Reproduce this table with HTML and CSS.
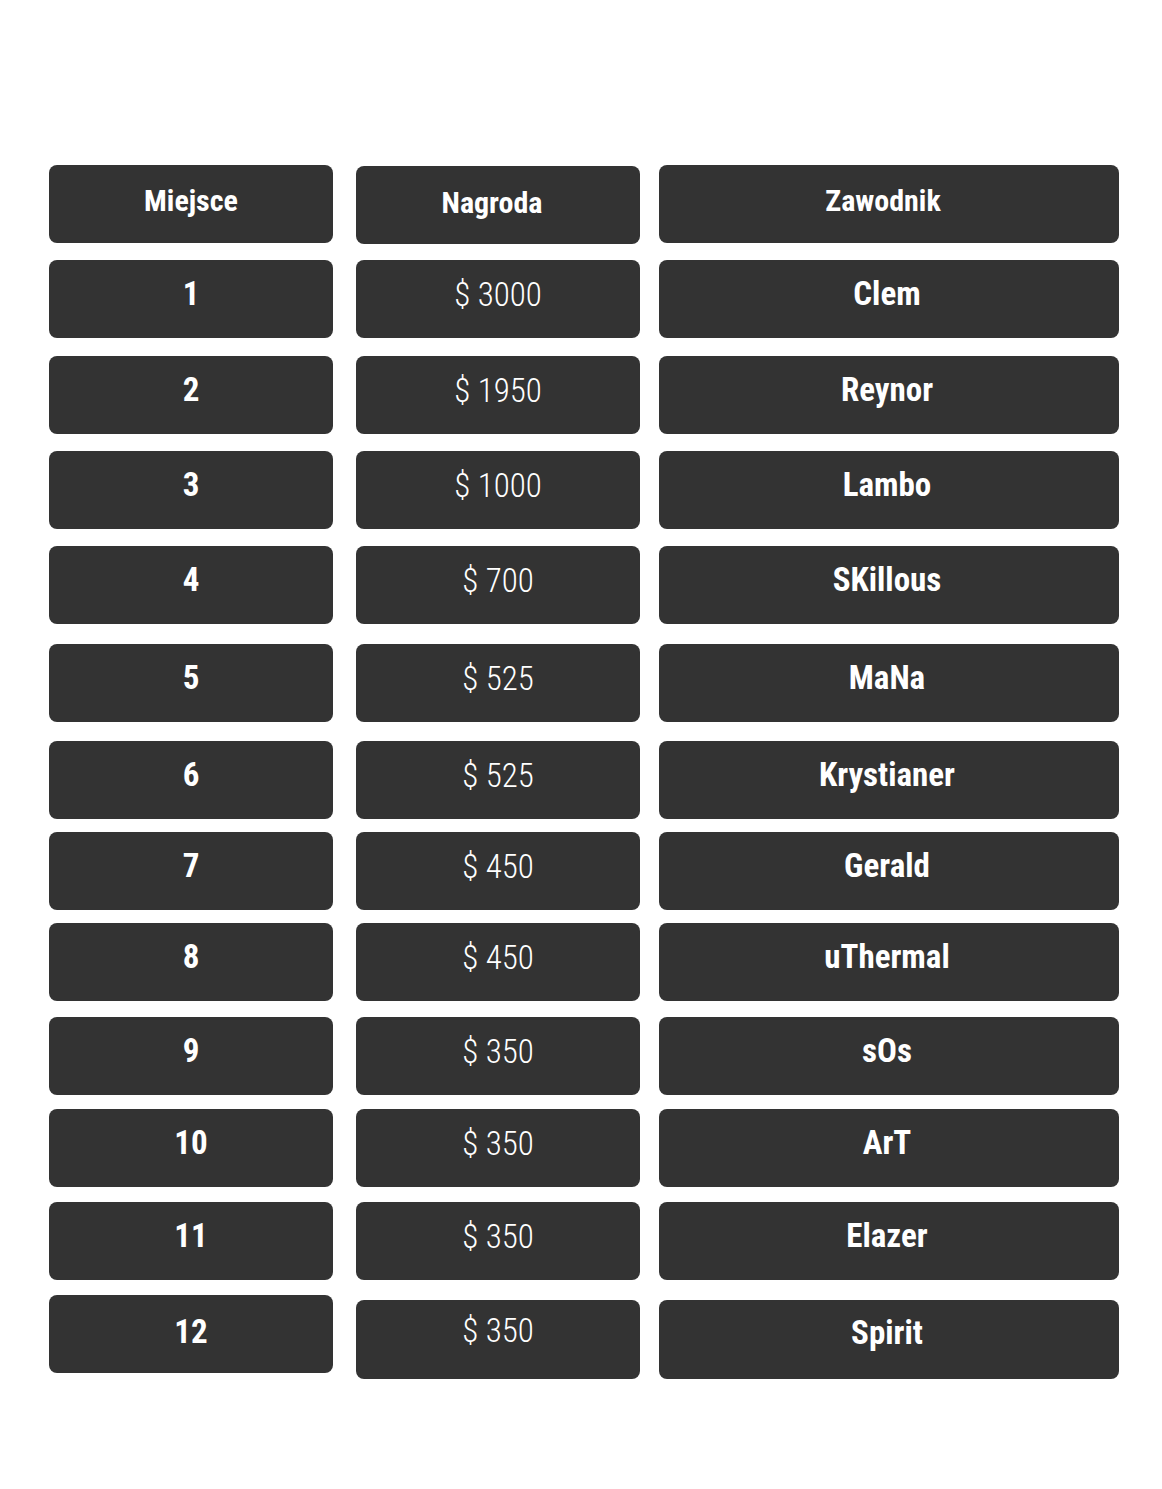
FILE: index.html
```html
<!DOCTYPE html>
<html lang="pl">
<head>
<meta charset="utf-8">
<title>Wyniki</title>
<link rel="stylesheet" href="styles.css">
</head>
<body>
<main class="board">
  <div class="cell head">Miejsce</div>
  <div class="cell head head-prize">Nagroda</div>
  <div class="cell head wide head-player">Zawodnik</div>

  <div class="cell place">1</div>
  <div class="cell prize">$ 3000</div>
  <div class="cell player wide">Clem</div>

  <div class="cell place">2</div>
  <div class="cell prize">$ 1950</div>
  <div class="cell player wide">Reynor</div>

  <div class="cell place">3</div>
  <div class="cell prize">$ 1000</div>
  <div class="cell player wide">Lambo</div>

  <div class="cell place">4</div>
  <div class="cell prize">$ 700</div>
  <div class="cell player wide">SKillous</div>

  <div class="cell place">5</div>
  <div class="cell prize">$ 525</div>
  <div class="cell player wide">MaNa</div>

  <div class="cell place">6</div>
  <div class="cell prize">$ 525</div>
  <div class="cell player wide">Krystianer</div>

  <div class="cell place">7</div>
  <div class="cell prize">$ 450</div>
  <div class="cell player wide">Gerald</div>

  <div class="cell place">8</div>
  <div class="cell prize">$ 450</div>
  <div class="cell player wide">uThermal</div>

  <div class="cell place">9</div>
  <div class="cell prize">$ 350</div>
  <div class="cell player wide">sOs</div>

  <div class="cell place">10</div>
  <div class="cell prize">$ 350</div>
  <div class="cell player wide">ArT</div>

  <div class="cell place">11</div>
  <div class="cell prize">$ 350</div>
  <div class="cell player wide">Elazer</div>

  <div class="cell place last">12</div>
  <div class="cell prize last shifted">$ 350</div>
  <div class="cell player wide last shifted">Spirit</div>
</main>
</body>
</html>
```

FILE: styles.css
```css
html, body {
  margin: 0;
  padding: 0;
  background: #ffffff;
}

body {
  font-family: Roboto, "Liberation Sans", sans-serif;
  font-stretch: condensed;
  color: #ffffff;
}

.board {
  display: grid;
  grid-template-columns: 307px 303px 460px;
  grid-template-rows: 95px 96px 95px 95px 98px 97px 91px 91px 94px 92px 93px 93px 84px;
  padding: 165px 0 0 49px;
  height: 1324px;
}

.cell {
  width: 284px;
  height: 78px;
  box-sizing: border-box;
  background: #333333;
  border-radius: 8px;
  text-align: center;
  line-height: 1.17;
  padding-top: 15px;
  white-space: nowrap;
}

.cell.wide {
  width: 460px;
  padding-right: 4px;
}

.head {
  font-size: 30px;
  font-weight: 700;
  padding-top: 18px;
}

.head-prize {
  margin-top: 1px;
  padding-top: 19px;
  padding-right: 12px;
}

.cell.head-player {
  padding-right: 12px;
}

.place,
.player {
  font-size: 33px;
  font-weight: 700;
}

.prize {
  font-size: 33px;
  font-weight: 300;
  padding-top: 16px;
}

.shifted {
  margin-top: 5px;
  height: 79px;
}

.place.last {
  padding-top: 18px;
}

.prize.last {
  padding-top: 12px;
}

.player.last {
  padding-top: 14px;
}
```
